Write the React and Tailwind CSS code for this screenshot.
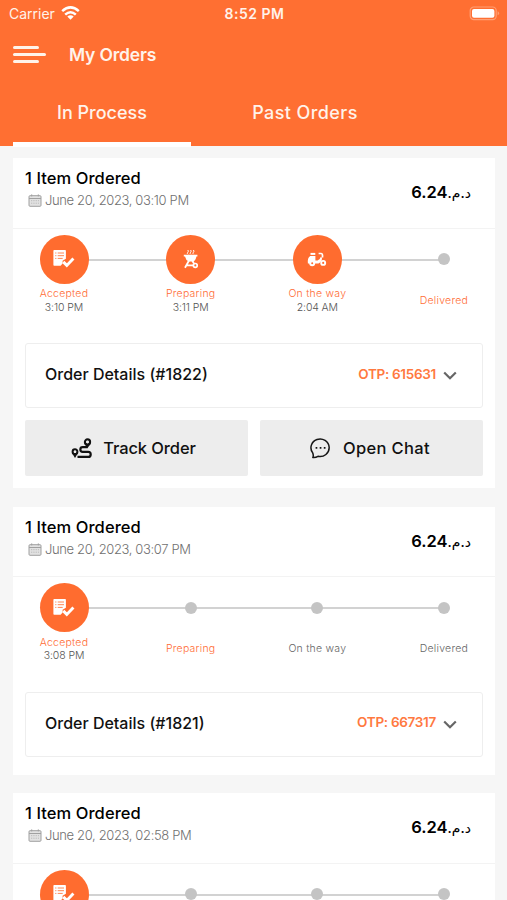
import React from 'react'

const orders = [
    {
        id: 1822,
        date: 'June 20, 2023, 03:10 PM',
        otp: '615631',
        actions: true,
        steps: [
            { label: 'Accepted', time: '3:10 PM', icon: 'accepted', active: true },
            { label: 'Preparing', time: '3:11 PM', icon: 'preparing', active: true },
            { label: 'On the way', time: '2:04 AM', icon: 'onway', active: true },
            { label: 'Delivered', active: true },
        ],
    },
    {
        id: 1821,
        date: 'June 20, 2023, 03:07 PM',
        otp: '667317',
        steps: [
            { label: 'Accepted', time: '3:08 PM', icon: 'accepted', active: true },
            { label: 'Preparing', active: true },
            { label: 'On the way' },
            { label: 'Delivered' },
        ],
    },
    {
        id: 1820,
        date: 'June 20, 2023, 02:58 PM',
        steps: [{ icon: 'accepted' }, {}, {}, {}],
    },
]

const AcceptedIcon = () => (
    <svg width="22" height="18" viewBox="0 0 22 18" fill="none">
        <path d="M1.200 0h10.900q.8 0 .8.800v7.900l-3.300 2v2.700l-2 2.300H1.200q-.8 0-.8-.8V.8q0-.8.8-.8Z" fill="#fff" />
        <path d="M2.200 3h1.200M4.700 3h6.300M2.200 5.700h1.200M4.700 5.700h6.300M2.200 8.400h1.200M4.700 8.400h5" stroke="#ff7a42" strokeWidth=".9" />
        <path d="M10.300 11.900l3.500 3.500 6.600-6.800" stroke="#fff" strokeWidth="2.900" />
    </svg>
)

const PreparingIcon = () => (
    <svg width="16" height="20" viewBox="0 0 16 20" fill="none" stroke="#fff">
        <path d="M4.800 1q1.200 1.200 0 2.300t.3 1.900M7.600 1q1.200 1.200 0 2.300t.3 1.900M10.400 1q1.200 1.200 0 2.300t.3 1.900" strokeWidth="1" />
        <path d="M.8 5.800h13.600v1.600h-1q-.5 4-3.600 5.200H5.800Q2.700 11.200 2 7.400H.8Z" fill="#fff" stroke="none" />
        <path d="M6 11.500L2 18.800M9.300 11.500l1.600 3M3.500 16.300h7" strokeWidth="1.800" />
        <circle cx="12.300" cy="16.400" r="1.900" strokeWidth="1.700" />
    </svg>
)

const ScooterIcon = () => (
    <svg width="20" height="15" viewBox="0 0 20 15" fill="none" stroke="#fff">
        <path d="M3.500 1.900h4.800" strokeWidth="2" />
        <path d="M3.200 4h5.200v4.600h2.200q2.600-.7 2.800-3.400l1.700.3q-.2 4.800-3.600 5.900H.9Q.2 6 3.200 4Z" fill="#fff" stroke="none" />
        <path d="M11.600 1.500h2.600q1.300.1 1.300 1.500v2.600" strokeWidth="1.700" />
        <circle cx="5.200" cy="11.300" r="2" strokeWidth="2" fill="#ff6c2f" />
        <circle cx="16.200" cy="10.900" r="2" strokeWidth="1.900" />
    </svg>
)

const icons = { accepted: AcceptedIcon, preparing: PreparingIcon, onway: ScooterIcon }

const CalendarIcon = () => (
    <svg width="14" height="13" viewBox="0 0 14 13" fill="none" stroke="#a0a0a0">
        <rect x="1" y="1.700" width="12" height="10.600" rx="1" fill="#e2e2e2" />
        <path d="M1 4.500h12M3.700.4v2M10.300.4v2" />
        <path d="M3 6.700h8M3 9.200h8" strokeDasharray="1.300 1" stroke="#bbb" />
    </svg>
)

const WifiIcon = () => (
    <svg width="19" height="14" viewBox="0 0 19 14" fill="none" stroke="#fff" strokeWidth="2.500">
        <path d="M1.200 5.200Q9.500-2.400 17.800 5.200" />
        <path d="M4.200 8.700Q9.500 3.700 14.800 8.700" />
        <path d="M9.500 13.700L6.300 10.500Q9.500 8 12.700 10.500Z" fill="#fff" stroke="none" />
    </svg>
)

const BatteryIcon = () => (
    <svg width="31" height="15" viewBox="0 0 31 15" fill="none">
        <rect x="1.200" y="1" width="26" height="12.600" rx="3.600" stroke="#ff9f74" strokeWidth="1.200" />
        <rect x="3" y="2.900" width="22.400" height="8.800" rx="2" fill="#fff" />
        <path d="M28.600 5.300q1.500.5 1.500 2t-1.500 2Z" fill="#ff9f74" />
    </svg>
)

const RouteIcon = () => (
    <svg width="21" height="21" viewBox="0 0 21 21" fill="none" stroke="#111">
        <circle cx="16.500" cy="4" r="2.500" strokeWidth="2.300" />
        <path d="M13.300 5.500L16.500 10.200 19.700 5.500Z" fill="#111" stroke="none" />
        <circle cx="16.500" cy="4" r="1.400" fill="#ededed" stroke="none" />
        <circle cx="4" cy="13.700" r="2.300" strokeWidth="2.200" />
        <path d="M1 15L4 20 7 15Z" fill="#111" stroke="none" />
        <circle cx="4" cy="13.700" r="1.300" fill="#ededed" stroke="none" />
        <path d="M16.500 9.200h-4.800a2.300 2.300 0 0 0 0 4.700h5.500a2.500 2.500 0 0 1 0 5H6.500" strokeWidth="2.200" />
    </svg>
)

const ChatIcon = () => (
    <svg width="21" height="21" viewBox="0 0 21 21" fill="none" stroke="#161616" strokeWidth="1.500">
        <path d="M2.700 14.900A9.100 8.800 0 1 1 8 18.300Q5.700 19.800 2.800 19.500 3.800 17.400 2.700 14.900Z" strokeLinejoin="round" />
        <path d="M5.600 9.800h1.700M9.700 9.800h1.700M13.800 9.800h1.700" strokeWidth="1.700" />
    </svg>
)

const Step = ({ step }) => {
    const Icon = icons[step.icon]
    return (
        <div className="relative flex w-[49px] flex-col items-center">
            <div className="flex h-[49px] items-center justify-center">
                {Icon ? (
                    <div className="flex size-[49px] items-center justify-center rounded-full bg-[#ff6c2f]">
                        <Icon />
                    </div>
                ) : (
                    <div className="size-3 rounded-full bg-[#c4c4c4]" />
                )}
            </div>
            {step.label && (
                <div className="mt-[3.5px] flex h-[27px] flex-col items-center justify-center text-[10.5px] leading-[13.5px] font-light whitespace-nowrap">
                    <span className={`tracking-[0.24px] ${step.active ? 'text-[#ff6c35]' : 'text-[#666]'}`}>{step.label}</span>
                    {step.time && <span className="text-[#555] tracking-[-0.1px]">{step.time}</span>}
                </div>
            )}
        </div>
    )
}

const OrderCard = ({ order }) => (
    <section className={`shrink-0 bg-white ${order.actions ? 'pb-3' : 'pb-[18px]'}`}>
        <div className="flex h-[70.5px] justify-between border-b border-[#f3f3f3] pr-6 pl-3">
            <div className="pt-[9px]">
                <h2 className="text-[16.5px] leading-[23px] font-medium tracking-[0.08px] text-black">1 Item Ordered</h2>
                <div className="flex items-center gap-[3px] pl-[3px] text-[13px] leading-[21px] font-light text-[#707070]">
                    <CalendarIcon />
                    <span className="tracking-[-0.36px] whitespace-nowrap">{order.date}</span>
                </div>
            </div>
            <div dir="rtl" className="pt-[22px] text-[16.5px] leading-[24px] font-semibold tracking-[-0.3px] text-black">
                <span className="text-[14px] font-medium">د.م.</span>6.24
            </div>
        </div>
        <div className="relative flex justify-between px-[26.5px] pt-[6px]">
            <div className="absolute top-[30px] right-[52px] left-[50px] h-[2px] bg-[#d2d2d2]" />
            {order.steps.map((step, i) => <Step key={i} step={step} />)}
        </div>
        {order.otp && (
            <div className="mx-3 mt-[29px] flex h-[65px] items-center justify-between rounded-[3px] border border-[#eee] pr-[25px] pb-[3px] pl-[19px]">
                <span className="text-[16px] leading-[22px] font-medium text-[#111]">Order Details (#{order.id})</span>
                <div className="flex items-center gap-[7px]">
                    <span className="text-[13.5px] font-semibold tracking-[-0.3px] text-[#ff7940]">OTP: {order.otp}</span>
                    <svg width="14" height="9" viewBox="0 0 14 9" fill="none" stroke="#666" strokeWidth="2.200" className="mt-[3px]">
                        <path d="M1.200 1.500l5.800 5.700 5.800-5.700" />
                    </svg>
                </div>
            </div>
        )}
        {order.actions && (
            <div className="mx-3 mt-3 grid grid-cols-2 gap-3">
                <button className="flex h-14 items-center justify-center gap-[11px] rounded-[2px] bg-[#ededed] pr-[6px] text-[16.5px] font-medium tracking-[-0.1px] text-[#111]">
                    <RouteIcon />
                    <span>Track Order</span>
                </button>
                <button className="flex h-14 items-center justify-center gap-[12px] rounded-[2px] bg-[#ededed] pr-[3px] text-[16.5px] font-medium tracking-[0.35px] text-[#111]">
                    <ChatIcon />
                    <span>Open Chat</span>
                </button>
            </div>
        )}
    </section>
)

export default function App() {
    return (
        <div className="flex h-[900px] w-[507px] flex-col overflow-hidden bg-[#f6f6f6] font-['Inter','DejaVu_Sans',sans-serif]">
            <header className="flex h-[146px] shrink-0 flex-col bg-[#ff6f32] text-[#fff3ea]">
                <div className="grid h-[27px] grid-cols-3 items-center pr-[7px] pl-[9px] text-[14px]">
                    <div className="flex items-center gap-[6px]">
                        <span>Carrier</span>
                        <WifiIcon />
                    </div>
                    <span className="text-center font-semibold tracking-[0.5px]">8:52 PM</span>
                    <div className="flex justify-end"><BatteryIcon /></div>
                </div>
                <div className="flex h-[56px] items-center gap-[23px] pl-[13px]">
                    <div className="flex w-[33px] flex-col gap-1">
                        <div className="h-[3px] w-[26px] rounded-full bg-[#fff3ea]" />
                        <div className="h-[3px] w-[33px] rounded-full bg-[#fff3ea]" />
                        <div className="h-[3px] w-[26px] rounded-full bg-[#fff3ea]" />
                    </div>
                    <h1 className="text-[17.5px] font-semibold tracking-[-0.18px]">My Orders</h1>
                </div>
                <nav className="flex h-[64px] gap-[25px] pl-[13px] text-[18px] font-medium">
                    <div className="relative flex w-[178px] justify-center pt-[17px]">
                        <span>In Process</span>
                        <div className="absolute inset-x-0 -bottom-px h-[5px] bg-white" />
                    </div>
                    <div className="flex w-[178px] justify-center pt-[17px]">
                        <span className="tracking-[0.4px]">Past Orders</span>
                    </div>
                </nav>
            </header>
            <main className="flex flex-col gap-[18.5px] px-3 pt-3 pl-[13px]">
                {orders.map((order) => <OrderCard key={order.id} order={order} />)}
            </main>
        </div>
    )
}
